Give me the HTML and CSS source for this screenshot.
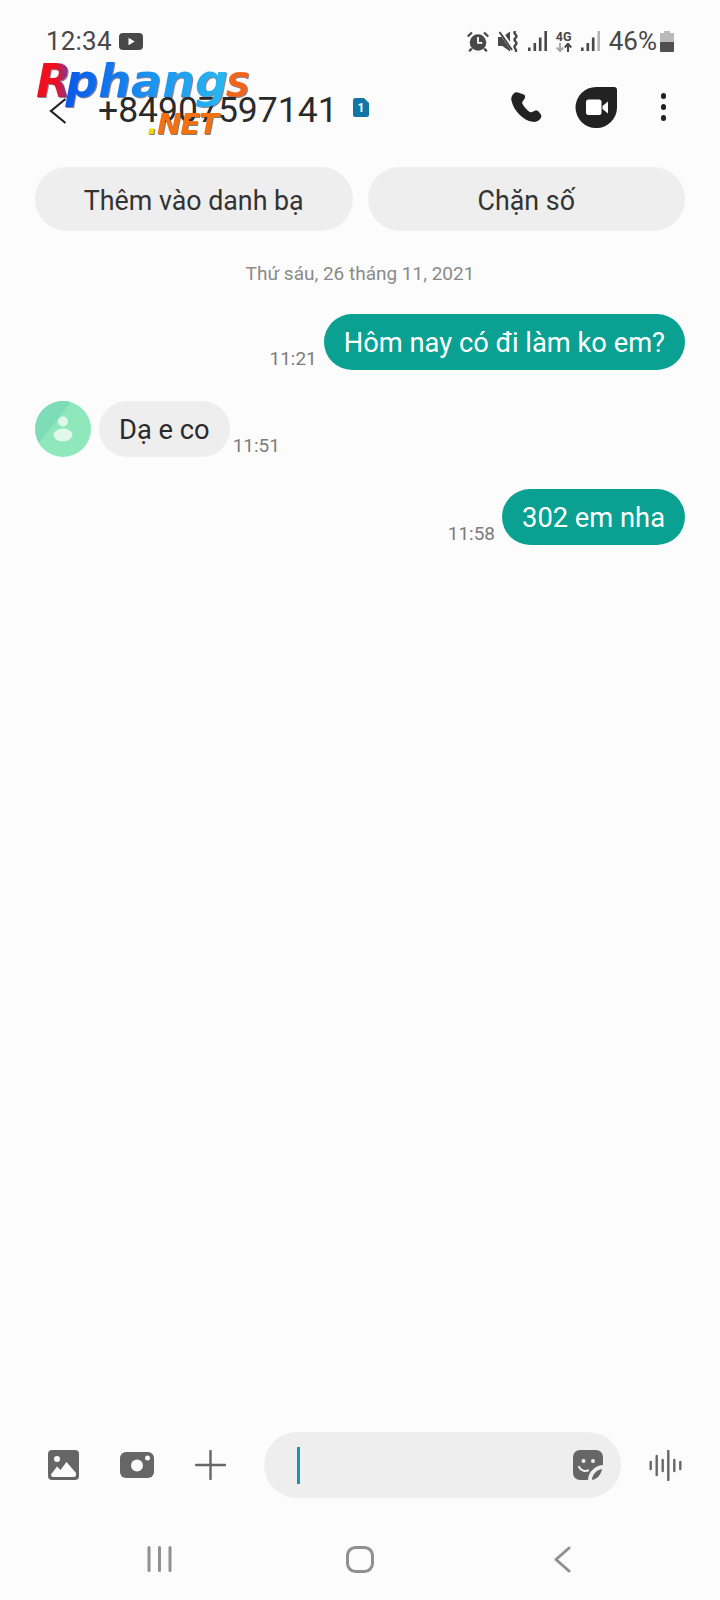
FILE: index.html
```html
<!DOCTYPE html>
<html lang="vi">
<head>
<meta charset="utf-8">
<title>Tin nhắn</title>
<link rel="stylesheet" href="styles.css">
</head>
<body>
<div class="screen">
  <div class="status">
    <div class="status-left">
      <span class="clock">12:34</span>
      <svg class="yt" viewBox="0 0 24 17"><rect width="24" height="17" rx="4" fill="#484848"/><path d="M9.5 4.8v7.4l6.2-3.7z" fill="#fff"/></svg>
    </div>
    <div class="status-right">
      <svg class="st-alarm" viewBox="0 0 22 21"><circle cx="11" cy="11.500" r="8.300" fill="#484848"/><path d="M11 6v5.800h4.300" fill="none" stroke="#fff" stroke-width="1.800"/><path d="M.8 5.500L5 1.500M21.200 5.500L17 1.500M4.800 17.500l-2.600 2.800M17.200 17.500l2.600 2.800" stroke="#484848" stroke-width="2.300" fill="none"/></svg>
      <svg class="st-mute" viewBox="0 0 21 21"><path d="M0 6h4.500L12 .5v20l-7.500-5.500H0z" fill="#484848"/><path d="M2 0l12.500 18" stroke="#fcfcfc" stroke-width="4"/><path d="M1.500 1l12.500 18" stroke="#484848" stroke-width="2"/><path d="M17.500 0c-3.500 3 3.500 4 0 7s3.500 4 0 7 2.500 4 0 7" fill="none" stroke="#484848" stroke-width="2.400"/></svg>
      <svg class="st-sig" viewBox="0 0 19 20"><path d="M1.300 20v-3.500M6.800 20v-8M12.200 20V6.500M17.700 20V0" stroke="#484848" stroke-width="2.600"/></svg>
      <div class="st-net">
        <span class="net-label">4G</span>
        <svg class="net-arrows" viewBox="0 0 16 9"><path d="M4 0v7.500M.8 4.500L4 8.300l3.200-3.800" fill="none" stroke="#a8a8a8" stroke-width="2"/><path d="M12 9V1.500M8.800 4.500L12 .7l3.200 3.800" fill="none" stroke="#484848" stroke-width="2"/></svg>
      </div>
      <svg class="st-sig st-sig2" viewBox="0 0 19 20"><path d="M1.300 20v-3.500M6.800 20v-8M12.200 20V6.500" stroke="#484848" stroke-width="2.600"/><path d="M17.700 20V0" stroke="#b5b5b5" stroke-width="2.600"/></svg>
      <span class="pct">46%</span>
      <svg class="st-batt" viewBox="0 0 14 21"><path d="M4 0h6v2h4v9H0V2h4z" fill="#b9b9b9"/><path d="M0 11h14v9a1 1 0 0 1-1 1H1a1 1 0 0 1-1-1z" fill="#505050"/></svg>
    </div>
  </div>

  <header class="topbar">
    <svg class="back" viewBox="0 0 18 26"><path d="M16.500 1L2 13l14.500 12" fill="none" stroke="#222" stroke-width="2.200"/></svg>
    <span class="title">+84907597141</span>
    <svg class="sim" viewBox="0 0 16 19"><path d="M2.500 0H11l5 5v11.500a2.500 2.500 0 0 1-2.500 2.500h-11A2.500 2.500 0 0 1 0 16.500v-14A2.500 2.500 0 0 1 2.500 0z" fill="#1076a8"/><text x="8" y="14" text-anchor="middle" class="sim-num">1</text></svg>
    <div class="top-actions">
      <svg class="call" viewBox="0 0 31 30"><path d="M7.800.7C6.300-.3 4 .1 2.700 1.500.8 3.500-.2 5.800.5 8.800c1.200 5.200 4 9.800 8 14 3.900 3.800 8.300 6.300 13 7 2.900.4 5.200-.4 7.400-2.500 1.500-1.500 1.900-3.700.8-5.100l-1.700-2.200c-1.100-1.400-3-1.800-4.600-1.100l-2.300 1c-1.200.5-2.200.3-3.200-.5-2.600-2-4.600-4.400-6.300-7.400-.6-1.100-.5-2.100.4-3L13.300 7c1.100-1.200 1.100-3 .1-4.200z" fill="#222"/></svg>
      <svg class="duo" viewBox="0 0 42 41"><path d="M21 41A20.500 20.500 0 0 1 21 0h18a3 3 0 0 1 3 3v18a20.500 20.500 0 0 1-21 20z" fill="#222"/><rect x="11" y="12.500" width="15.500" height="15.500" rx="2.500" fill="#fff"/><path d="M27.500 19l5.500-4.500v12L27.500 22z" fill="#fff"/></svg>
      <div class="dots"><i></i><i></i><i></i></div>
    </div>
  </header>

  <div class="logo" aria-label="Rphangs.NET">
    <div class="logo-main"><span class="logo-r">R</span><span class="logo-phang">phang</span><span class="logo-s">S</span></div>
    <div class="logo-net"><span class="logo-dot">.</span>NET</div>
  </div>

  <div class="actions">
    <button class="pill-btn">Thêm vào danh bạ</button>
    <button class="pill-btn">Chặn số</button>
  </div>

  <div class="date">Thứ sáu, 26 tháng 11, 2021</div>

  <main class="thread">
    <div class="row out">
      <span class="time">11:21</span>
      <div class="bubble green">Hôm nay có đi làm ko em?</div>
    </div>
    <div class="row in">
      <div class="avatar">
        <svg viewBox="0 0 56 56"><circle cx="28" cy="28" r="28" fill="#8ee8bb"/><path d="M28 0A28 28 0 0 0 4 42L36 1A28 28 0 0 0 28 0z" fill="#7fdcb9"/><circle cx="28" cy="20.500" r="5" fill="#e0f8eb"/><ellipse cx="28" cy="34" rx="9.500" ry="6.500" fill="#e0f8eb"/></svg>
      </div>
      <div class="bubble gray">Dạ e co</div>
      <span class="time">11:51</span>
    </div>
    <div class="row out">
      <span class="time">11:58</span>
      <div class="bubble green">302 em nha</div>
    </div>
  </main>

  <div class="composer">
    <svg class="c-img" viewBox="0 0 31 30"><rect width="31" height="30" rx="4" fill="#666"/><path d="M3 24.500l6-8 3.500 3.500 6-8 9.500 11v1.500a2.500 2.500 0 0 1-2.500 2.500h-20A2.500 2.500 0 0 1 3 24.500z" fill="#fcfcfc"/><circle cx="9" cy="9" r="3" fill="#fcfcfc"/></svg>
    <svg class="c-cam" viewBox="0 0 34 26"><rect width="34" height="26" rx="6" fill="#666"/><circle cx="17" cy="13.500" r="6" fill="#fcfcfc"/><circle cx="27.500" cy="6" r="2.500" fill="#fcfcfc"/></svg>
    <svg class="c-plus" viewBox="0 0 31 30"><path d="M15.500 1v28M1 15h29" stroke="#666" stroke-width="2.400" stroke-linecap="round"/></svg>
    <div class="input">
      <span class="cursor"></span>
      <svg class="c-sticker" viewBox="0 0 30 30"><path d="M7 0h16a7 7 0 0 1 7 7v8C24 15 15 21 15 30H7a7 7 0 0 1-7-7V7a7 7 0 0 1 7-7z" fill="#666"/><path d="M19 30c0-6 5-10 10-11-1 6-5 10-10 11z" fill="#666"/><circle cx="10.500" cy="11" r="2" fill="#eee"/><circle cx="20" cy="11" r="2" fill="#eee"/><path d="M6 17c2 3.500 6 4.500 9 3.500" fill="none" stroke="#eee" stroke-width="2.200" stroke-linecap="round"/></svg>
    </div>
    <svg class="c-voice" viewBox="0 0 33 31"><path d="M1.700 12v7M7.700 6v19M13.700 10v11M19.300 1v29M25.300 10v11M31.300 12v7" stroke="#666" stroke-width="2.400" stroke-linecap="round"/></svg>
  </div>

  <nav class="nav">
    <div class="nav-cell"><svg class="n-recent" viewBox="0 0 25 26"><path d="M2 1.500v23M12.500 1.500v23M23 1.500v23" stroke="#909090" stroke-width="3" stroke-linecap="round"/></svg></div>
    <div class="nav-cell"><svg class="n-home" viewBox="0 0 28 27"><rect x="1.500" y="1.500" width="25" height="24" rx="8" fill="none" stroke="#909090" stroke-width="3"/></svg></div>
    <div class="nav-cell"><svg class="n-back" viewBox="0 0 18 27"><path d="M16 2L3 13.500 16 25" fill="none" stroke="#909090" stroke-width="3" stroke-linecap="round" stroke-linejoin="round"/></svg></div>
  </nav>
</div>
</body>
</html>
```
FILE: styles.css
```css
* { box-sizing: border-box; }
html, body { margin: 0; padding: 0; }
body { background: #fcfcfc; font-family: Roboto, "Liberation Sans", sans-serif; }
svg { display: block; flex: none; }

.screen { position: relative; width: 720px; height: 1600px; display: flex; flex-direction: column; background: #fcfcfc; overflow: hidden; }

/* status bar */
.status { height: 64px; padding: 17px 46px 0 46px; display: flex; justify-content: space-between; align-items: flex-start; flex: none; }
.status-left { display: flex; align-items: center; height: 48px; }
.status-right { display: flex; align-items: center; height: 48px; }
.clock { font-size: 26px; color: #484848; line-height: 48px; letter-spacing: .2px; }
.yt { width: 24px; height: 17px; margin-left: 7px; }
.st-alarm { width: 22px; height: 21px; }
.st-mute { width: 21px; height: 21px; margin-left: 9px; }
.st-sig { width: 19px; height: 20px; margin-left: 9px; }
.st-net { width: 16px; margin-left: 9px; display: flex; flex-direction: column; align-items: center; }
.net-label { font-size: 12.500px; font-weight: 700; color: #484848; line-height: 11px; }
.net-arrows { width: 16px; height: 9px; margin-top: 1px; }
.pct { font-size: 26px; color: #484848; line-height: 48px; margin-left: 9px; }
.st-batt { width: 14px; height: 21px; margin-left: 3px; }

/* top bar */
.topbar { height: 86px; display: flex; align-items: center; padding-left: 49px; flex: none; }
.back { width: 18px; height: 26px; margin-top: 7px; }
.title { font-size: 35.500px; color: #2a2a2a; margin-left: 31px; line-height: 40px; padding-top: 6px; height: 46px; }
.sim { width: 16px; height: 19px; margin-left: 15px; }
.sim-num { font-family: Roboto, sans-serif; font-size: 12px; font-weight: 700; fill: #fff; }
.top-actions { margin-left: auto; display: flex; align-items: center; }
.call { width: 31px; height: 30px; }
.duo { width: 42px; height: 41px; margin-left: 33px; }
.dots { display: flex; flex-direction: column; gap: 5.500px; margin-left: 44px; margin-right: 54px; }
.dots i { display: block; width: 5.500px; height: 5.500px; border-radius: 50%; background: #222; }

/* watermark logo */
.logo { position: absolute; left: 33px; top: 50px; width: 230px; height: 90px; font-family: "DejaVu Sans", "Liberation Sans", sans-serif; font-style: italic; font-weight: 700; pointer-events: none; }
.logo-main { font-size: 46px; line-height: 62px; white-space: nowrap; filter: drop-shadow(1px 1px 0 rgba(50, 30, 60, .55)); }
.logo-r, .logo-phang { background-clip: text; -webkit-background-clip: text; color: transparent; }
.logo-r { background-image: linear-gradient(90deg, #f00f1e 0%, #f00f1e 55%, #6a3fb0 100%); margin-left: 3px; margin-right: -6px; }
.logo-phang { background-image: linear-gradient(90deg, #0a58e8 0%, #1a90f0 50%, #2ab8ee 100%); }
.logo-s { font-size: 34px; color: #f0641c; margin-left: -2px; }
.logo-net { position: absolute; left: 114px; top: 58px; font-size: 29px; line-height: 32px; letter-spacing: -1px; color: #f5710f; white-space: nowrap; filter: drop-shadow(1px 1px 0 rgba(50, 40, 30, .6)); }
.logo-dot { color: #f2d500; }

/* action pills */
.actions { display: flex; gap: 15px; padding: 17px 35px 0; flex: none; }
.pill-btn { flex: 1; height: 64px; border: 0; border-radius: 32px; background: #eeeeee; color: #333; font-family: Roboto, sans-serif; font-size: 26.800px; padding: 4px 0 0; }

/* date */
.date { text-align: center; font-size: 19px; line-height: 22px; color: #8a8a8a; margin-top: 32px; flex: none; }

/* thread */
.thread { flex: 1; display: flex; flex-direction: column; padding: 29px 35px 0; }
.row { display: flex; align-items: flex-end; }
.row.out { justify-content: flex-end; }
.row.in { margin-top: 31px; margin-bottom: 32px; }
.bubble { height: 56px; border-radius: 28px; padding: 3px 20px 0; font-size: 27.300px; line-height: 53px; white-space: nowrap; }
.bubble.green { background: #0aa192; color: #fff; }
.bubble.gray { background: #eeeeee; color: #2a2a2a; }
.time { font-size: 19px; line-height: 22px; color: #7d7d7d; }
.out .time { margin-right: 7px; }
.in .time { margin-left: 3px; }
.avatar { width: 56px; height: 56px; margin-right: 8px; }
.avatar svg { width: 56px; height: 56px; }

/* composer */
.composer { display: flex; align-items: center; padding-left: 48px; height: 66px; flex: none; }
.c-img { width: 31px; height: 30px; }
.c-cam { width: 34px; height: 26px; margin-left: 41px; }
.c-plus { width: 31px; height: 30px; margin-left: 41px; }
.input { width: 357px; height: 66px; margin-left: 38px; border-radius: 33px; background: #eeeeee; display: flex; align-items: center; justify-content: space-between; padding: 0 18px 0 33px; }
.cursor { width: 2.500px; height: 37px; background: #1c90b8; }
.c-sticker { width: 30px; height: 30px; }
.c-voice { width: 33px; height: 31px; margin-left: 28px; }

/* navigation */
.nav { height: 102px; display: grid; grid-template-columns: repeat(3, 1fr); padding: 20px 59px 0; align-items: center; flex: none; }
.nav-cell { display: flex; justify-content: center; }
.n-recent { width: 25px; height: 26px; }
.n-home { width: 28px; height: 27px; }
.n-back { width: 18px; height: 27px; margin-left: 2px; }
```
